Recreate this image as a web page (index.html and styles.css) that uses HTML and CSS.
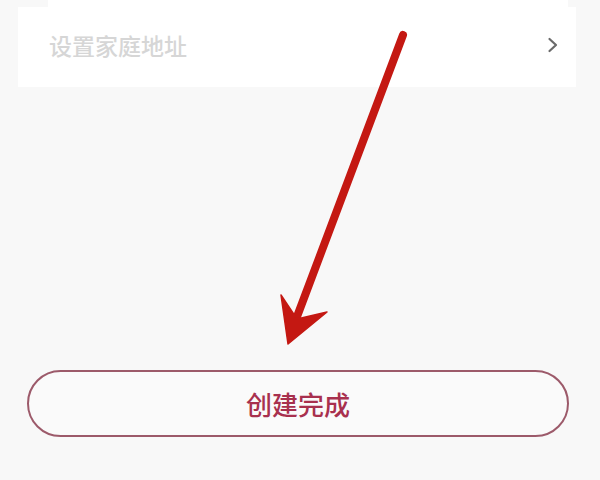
FILE: index.html
```html
<!DOCTYPE html>
<html lang="zh">
<head>
<meta charset="utf-8">
<link rel="stylesheet" href="styles.css">
</head>
<body>
<div class="page">
  <div class="strip"></div>
  <div class="card">
    <span class="placeholder">设置家庭地址</span>
    <svg class="chevron" width="12" height="16" viewBox="0 0 12 16"><polyline points="2.5,2 9,8 2.5,14" fill="none" stroke="#6a6a6a" stroke-width="2.2" stroke-linecap="round" stroke-linejoin="round"/></svg>
  </div>
  <button class="done">创建完成</button>
  <svg class="arrow" width="600" height="480" viewBox="0 0 600 480">
    <line x1="403" y1="35" x2="295" y2="322" stroke="#c41812" stroke-width="8" stroke-linecap="round"/>
    <polygon points="288,344 281,295 297,319 327,312" fill="#c41812" stroke="#c41812" stroke-width="1.5" stroke-linejoin="round"/>
  </svg>
</div>
</body>
</html>
```

FILE: styles.css
```css
html, body {
  margin: 0;
  padding: 0;
  background: #f8f8f8;
  font-family: "Noto Sans CJK SC", "Noto Sans", sans-serif;
}
.page {
  position: relative;
  width: 600px;
  height: 480px;
  overflow: hidden;
}
.strip {
  height: 7px;
  margin: 0 32px 0 48px;
  background: #fff;
}
.card {
  display: flex;
  align-items: center;
  justify-content: space-between;
  height: 80px;
  margin: 0 24px 0 18px;
  padding: 0 17px 0 31px;
  background: #fff;
  box-sizing: border-box;
}
.placeholder {
  font-size: 23px;
  font-weight: 500;
  color: #d6d6d6;
  line-height: 1;
  margin-top: -4px;
}
.chevron {
  display: block;
  margin-top: -4px;
}
.done {
  display: block;
  box-sizing: border-box;
  width: 542px;
  height: 67px;
  margin: 283px 0 0 27px;
  border: 2px solid #9c5a6a;
  border-radius: 34px;
  background: #fafafa;
  color: #a8304e;
  font-family: "Noto Sans CJK SC", "Noto Sans", sans-serif;
  font-size: 26px;
  font-weight: 500;
  line-height: 1;
  padding: 0;
}
.arrow {
  position: absolute;
  left: 0;
  top: 0;
  pointer-events: none;
}
```
